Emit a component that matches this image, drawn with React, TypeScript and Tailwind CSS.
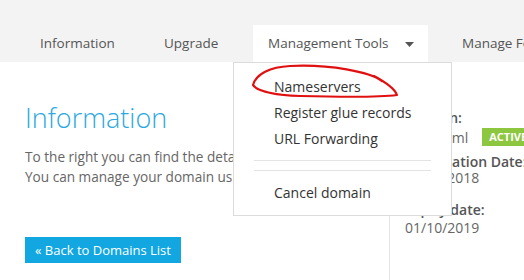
import React from "react";

export default function App() {
  return (
    <div className="relative w-[524px] h-[280px] overflow-hidden bg-white font-['Open_Sans',sans-serif]">
      {/* top nav */}
      <div className="h-[62px] bg-[#f3f3f3] flex items-end pl-[25px] text-[13.5px] text-[#555] whitespace-nowrap">
        <div className="shrink-0 w-[124px] h-[37px] flex items-center pl-[15px]">Information</div>
        <div className="shrink-0 w-[104px] h-[37px] flex items-center pl-[15px]">Upgrade</div>
        <div className="shrink-0 w-[175px] h-[37px] flex items-center pl-[15px] bg-white">
          <span>Management Tools</span>
          <svg className="ml-[16px] mt-[1px]" width="9" height="5" viewBox="0 0 9 5">
            <path d="M0 0 H9 L4.5 5 Z" fill="#555" />
          </svg>
        </div>
        <div className="shrink-0 h-[37px] flex items-center pl-[34px]">Manage Forwarding</div>
      </div>

      {/* content */}
      <div className="flex h-[218px]">
        <div className="w-[389px] pl-[25px] shrink-0">
          <h1 className="mt-[38px] text-[27px] font-light leading-[36px] text-[#2aa9e0]">Information</h1>
          <p className="mt-[11px] text-[13.6px] leading-[20px] text-[#666] whitespace-nowrap">
            To the right you can find the details of your domain.
            <br />
            You can manage your domain using the tools above.
          </p>
          <button className="mt-[50px] h-[26px] px-[10px] bg-[#12a7e1] text-white text-[13px] leading-[26px]">
            « Back to Domains List
          </button>
        </div>
        <div className="flex-1 border-l border-[#e5e5e5] pl-[15px] text-[14px] whitespace-nowrap">
          <div className="mt-[48px] font-semibold text-[#555] leading-[16px]">Domain:</div>
          <div className="mt-[2px] flex items-center h-[18px] text-[#666]">
            <span>mysite.ml</span>
            <span className="ml-[14px] h-[18px] px-[7px] bg-[#8dc63f] text-white text-[11px] font-bold leading-[18px]">ACTIVE</span>
          </div>
          <div className="mt-[8px] font-semibold text-[#555] leading-[16px]">Registration Date:</div>
          <div className="text-[#666] leading-[16px]">01/10/2018</div>
          <div className="mt-[16px] font-semibold text-[#555] leading-[16px]">Expiry date:</div>
          <div className="mt-[2px] text-[#666] leading-[16px]">01/10/2019</div>
        </div>
      </div>

      {/* dropdown */}
      <div className="absolute left-[233px] top-[62px] w-[219px] h-[154px] bg-white border border-[#dcdcdc] pt-[11px] text-[14px] text-[#333] whitespace-nowrap">
        <div className="pl-[40px] leading-[26px]">Nameservers</div>
        <div className="pl-[40px] leading-[26px]">Register glue records</div>
        <div className="pl-[40px] leading-[26px]">URL Forwarding</div>
        <div className="mx-[20px] mt-[8px] h-px bg-[#e3e3e3]" />
        <div className="mx-[20px] mt-[9px] h-px bg-[#e3e3e3]" />
        <div className="pl-[40px] mt-[9px] leading-[26px]">Cancel domain</div>
      </div>

      {/* red annotation */}
      <svg className="absolute left-0 top-0 pointer-events-none" width="524" height="280" viewBox="0 0 524 280">
        <path
          d="M382 81 C370 72, 330 64, 290 66 C270 67, 256 74, 253 85 C258 92, 275 95, 300 96 C340 97, 382 97, 397 95 C395 89, 387 83, 374 76"
          fill="none"
          stroke="#e01010"
          strokeWidth="2.2"
          strokeLinecap="round"
          strokeLinejoin="round"
        />
      </svg>
    </div>
  );
}
